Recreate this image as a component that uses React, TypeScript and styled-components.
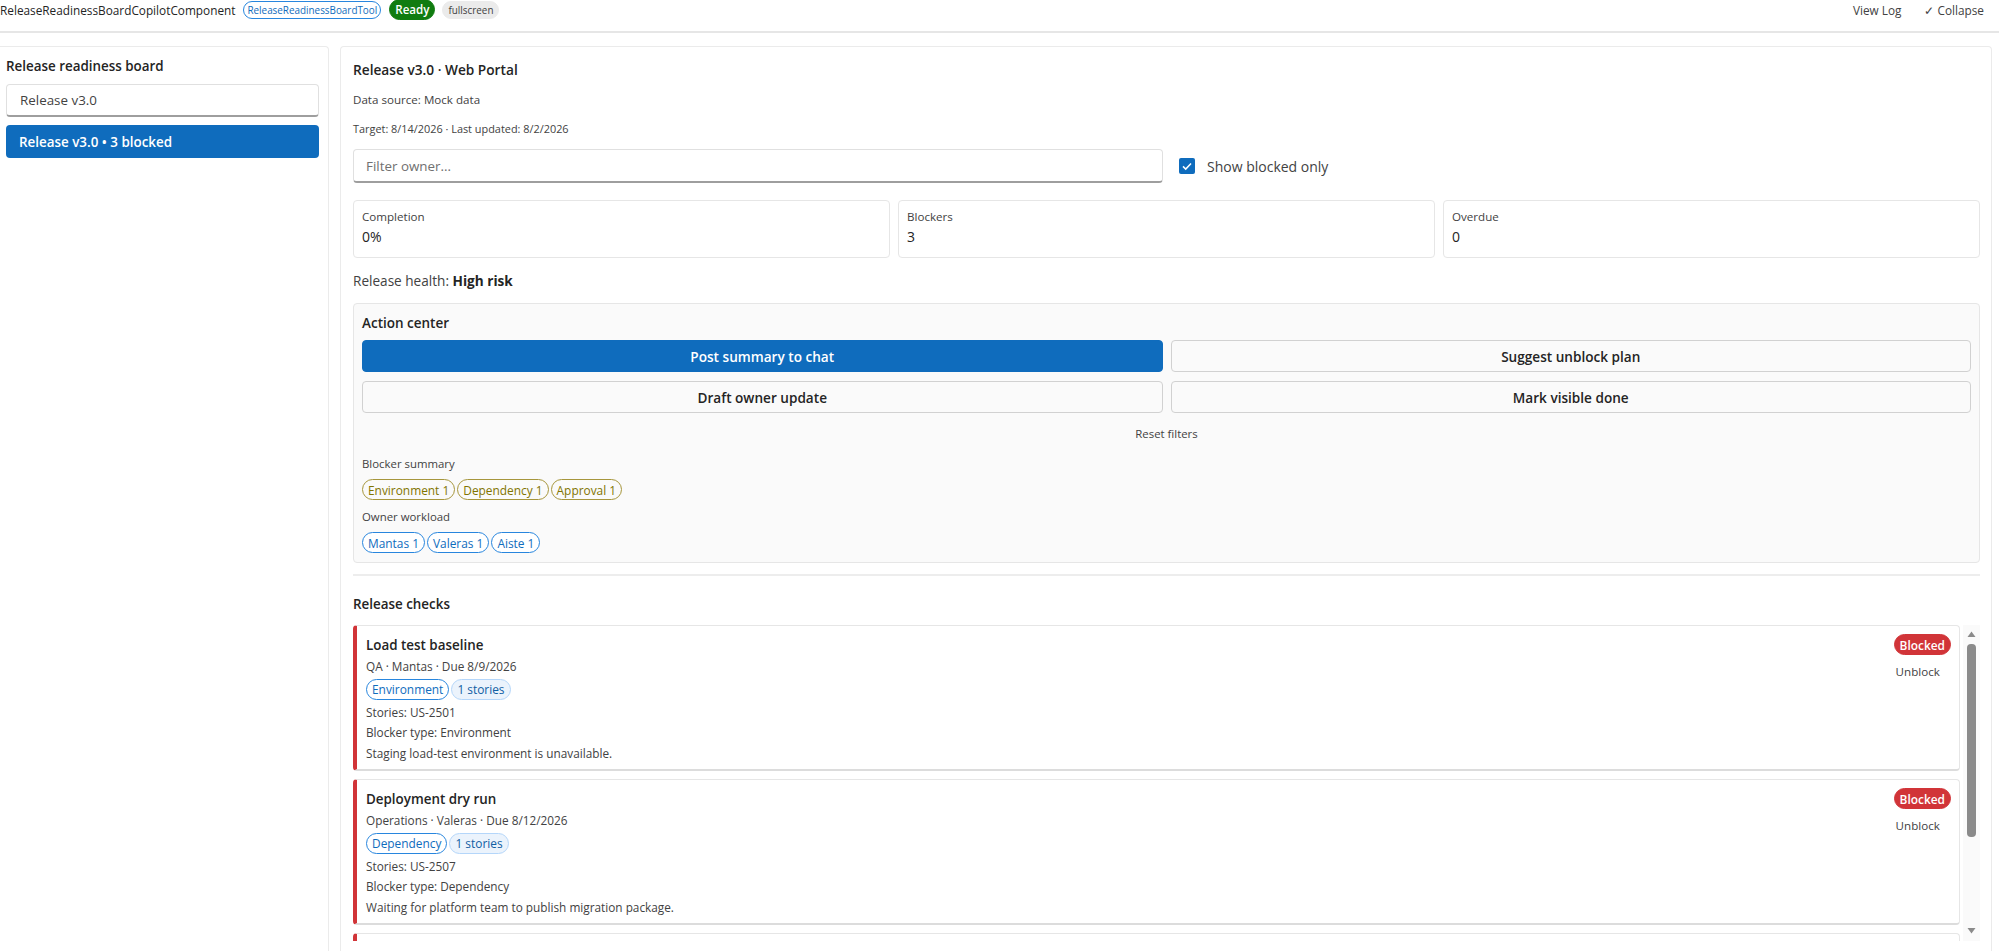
import styled, { createGlobalStyle, css } from "styled-components";

const GlobalStyle = createGlobalStyle`
  html, body {
    margin: 0;
    background: #ffffff;
    overflow: hidden;
  }

  body {
    font-family: "Open Sans", "Noto Sans", sans-serif;
    color: #242424;
  }
`;

const Page = styled.div`
  width: 1999px;
  height: 951px;
  overflow: hidden;
  display: flex;
  flex-direction: column;
`;

const Header = styled.header`
  flex: none;
  box-sizing: border-box;
  height: 33px;
  padding: 0 15px 12px 0;
  border-bottom: 2px solid #e6e6e6;
  display: flex;
  align-items: center;
  justify-content: space-between;
`;

const HeaderGroup = styled.div`
  display: flex;
  align-items: center;
  gap: 8px;
`;

const ComponentName = styled.span`
  font-size: 11.8px;
`;

const HeaderAction = styled.span`
  font-size: 11.8px;
  color: #424242;
  margin-left: 15px;
`;

type PillTone = "brand" | "olive" | "soft" | "ready" | "grey" | "danger";

const pillTones: Record<PillTone, ReturnType<typeof css>> = {
  brand: css`
    color: #0f6cbd;
    border-color: #2886de;
    background: #ffffff;
  `,
  olive: css`
    color: #817400;
    border-color: #a6963c;
    background: transparent;
  `,
  soft: css`
    color: #115ea3;
    border-color: #b4d6fa;
    background: #ebf3fc;
  `,
  ready: css`
    color: #ffffff;
    border-color: #107c10;
    background: #107c10;
    font-weight: 600;
  `,
  grey: css`
    color: #424242;
    border-color: #ebebeb;
    background: #ebebeb;
  `,
  danger: css`
    color: #ffffff;
    border-color: #d13438;
    background: #d13438;
    font-weight: 600;
  `,
};

const Pill = styled.span<{ $tone: PillTone; $size?: number }>`
  box-sizing: border-box;
  display: inline-flex;
  align-items: center;
  height: ${(p) => p.$size ?? 21}px;
  padding: 0 5px;
  border: 1px solid;
  border-radius: 999px;
  font-size: 11.9px;
  font-weight: 500;
  white-space: nowrap;
  ${(p) => pillTones[p.$tone]}
`;

const HeaderPill = styled(Pill)`
  font-size: 9.9px;
  font-weight: 400;
  padding: 0 3px;
`;

const FlagPill = styled(HeaderPill)`
  margin-left: -1px;
  padding: 0 5px;
`;

const ReadyPill = styled(Pill)`
  font-size: 11.6px;
`;

const Workspace = styled.main`
  flex: 1;
  min-height: 0;
  display: flex;
  gap: 11px;
  padding: 13px 7px 0 0;
`;

const Sidebar = styled.aside`
  flex: none;
  box-sizing: border-box;
  width: 329px;
  padding: 9px 9px 0 6px;
  border: 1px solid #ebebeb;
  border-left: 0;
  border-bottom: 0;
  border-top-right-radius: 4px;
  display: flex;
  flex-direction: column;
`;

const SidebarTitle = styled.div`
  font-size: 13.4px;
  font-weight: 600;
  line-height: 20px;
  margin-bottom: 8px;
`;

const SelectBox = styled.div`
  box-sizing: border-box;
  height: 33px;
  padding: 0 13px;
  border: 1px solid #e0e0e0;
  border-bottom: 2px solid #9e9e9e;
  border-radius: 4px;
  display: flex;
  align-items: center;
  font-size: 13.4px;
  color: #424242;
  margin-bottom: 8px;
`;

const ReleaseOption = styled.div`
  box-sizing: border-box;
  height: 33px;
  padding: 0 13px;
  border-radius: 4px;
  background: #0f6cbd;
  color: #ffffff;
  display: flex;
  align-items: center;
  font-size: 13.4px;
  font-weight: 600;
`;

const Board = styled.section`
  flex: 1;
  min-width: 0;
  box-sizing: border-box;
  padding: 13px 11px 10px 12px;
  border: 1px solid #ebebeb;
  border-bottom: 0;
  border-top-right-radius: 4px;
  border-top-left-radius: 4px;
  display: flex;
  flex-direction: column;
`;

const BoardTitle = styled.div`
  font-size: 13.7px;
  font-weight: 600;
  line-height: 20px;
  margin-bottom: 10px;
`;

const Caption = styled.div<{ $size: number }>`
  font-size: ${(p) => p.$size}px;
  line-height: 20px;
  color: #424242;
  margin-bottom: 9px;
`;

const FilterRow = styled.div`
  display: grid;
  grid-template-columns: 810px auto;
  align-items: center;
  justify-content: start;
  gap: 16px;
  margin: 1px 0 17px;
`;

const FilterInput = styled.div`
  box-sizing: border-box;
  height: 34px;
  padding: 0 12px;
  border: 1px solid #e0e0e0;
  border-bottom: 2px solid #9e9e9e;
  border-radius: 4px;
  display: flex;
  align-items: center;
  font-size: 13.4px;
  color: #707070;
`;

const CheckField = styled.label`
  display: flex;
  align-items: center;
  gap: 12px;
  font-size: 14px;
  color: #424242;
`;

const CheckMark = styled.span`
  width: 16px;
  height: 16px;
  border-radius: 2px;
  background: #0f6cbd;
  display: inline-flex;
  align-items: center;
  justify-content: center;
`;

const StatGrid = styled.div`
  display: grid;
  grid-template-columns: repeat(3, 1fr);
  gap: 8px;
`;

const StatCard = styled.div`
  box-sizing: border-box;
  height: 58px;
  padding: 6px 8px;
  border: 1px solid #e6e6e6;
  border-radius: 4px;
`;

const StatLabel = styled.div`
  font-size: 11.6px;
  line-height: 20px;
  color: #424242;
`;

const StatValue = styled.div`
  font-size: 14px;
  line-height: 20px;
`;

const Health = styled.div`
  font-size: 13.6px;
  line-height: 20px;
  color: #424242;
  margin: 13px 0 12px;

  strong {
    color: #242424;
    font-weight: 700;
  }
`;

const ActionCenter = styled.section`
  box-sizing: border-box;
  height: 260px;
  padding: 9px 8px;
  border: 1px solid #e6e6e6;
  border-radius: 4px;
  background: #fafafa;
`;

const ActionTitle = styled.div`
  font-size: 13.5px;
  font-weight: 600;
  line-height: 20px;
  margin-bottom: 7px;
`;

const ActionGrid = styled.div`
  display: grid;
  grid-template-columns: 1fr 1fr;
  gap: 9px 8px;
`;

const ActionButton = styled.button<{ $primary?: boolean }>`
  box-sizing: border-box;
  height: 32px;
  border-radius: 4px;
  font-family: inherit;
  font-size: 13.6px;
  font-weight: 600;
  border: 1px solid ${(p) => (p.$primary ? "#0f6cbd" : "#d1d1d1")};
  background: ${(p) => (p.$primary ? "#0f6cbd" : "#fafafa")};
  color: ${(p) => (p.$primary ? "#ffffff" : "#242424")};
`;

const ResetLink = styled.div`
  font-size: 11.4px;
  line-height: 20px;
  color: #424242;
  text-align: center;
  margin: 11px 0 10px;
`;

const GroupLabel = styled.div`
  font-size: 11.4px;
  line-height: 20px;
  color: #424242;
  margin-bottom: 5px;
`;

const ChipRow = styled.div`
  display: flex;
  gap: 2px;
  margin-bottom: 7px;
`;

const Divider = styled.hr`
  width: 100%;
  height: 2px;
  border: 0;
  background: #ededed;
  margin: 11px 0 18px;
`;

const SectionTitle = styled.div`
  font-size: 13.4px;
  font-weight: 600;
  line-height: 20px;
  margin-bottom: 11px;
`;

const ChecksViewport = styled.div`
  height: 316px;
  display: flex;
  gap: 3px;
`;

const CheckList = styled.div`
  flex: 1;
  min-width: 0;
  overflow: hidden;
  display: flex;
  flex-direction: column;
  gap: 8px;
`;

const CheckCard = styled.article`
  flex: none;
  box-sizing: border-box;
  height: 146px;
  padding: 8px 8px 0 9px;
  border: 1px solid #e6e6e6;
  border-left: 4px solid #d13438;
  border-bottom: 2px solid #dcdcdc;
  border-radius: 4px;
  display: flex;
  justify-content: space-between;
`;

const CheckBody = styled.div`
  display: flex;
  flex-direction: column;
`;

const CheckTitle = styled.div`
  font-size: 13.4px;
  font-weight: 600;
  line-height: 22px;
`;

const CheckLine = styled.div`
  font-size: 11.8px;
  line-height: 20.5px;
  color: #424242;
`;

const CheckChips = styled.div`
  display: flex;
  gap: 2px;
  margin: 2px 0 2px;
`;

const CheckSide = styled.div`
  display: flex;
  flex-direction: column;
  align-items: flex-start;
  gap: 7px;
`;

const UnblockLink = styled.span`
  font-size: 11.6px;
  line-height: 20px;
  color: #424242;
  margin-left: 2px;
`;

const ScrollRail = styled.div`
  flex: none;
  width: 17px;
  background: #fafafa;
  display: flex;
  flex-direction: column;
  align-items: center;
  padding: 6px 0 7px;
  box-sizing: border-box;
`;

const ScrollThumb = styled.div`
  width: 9px;
  height: 193px;
  margin-top: 6px;
  border-radius: 4px;
  background: #8a8a8a;
`;

const RailSpacer = styled.div`
  flex: 1;
`;

function RailArrow({ down }: { down?: boolean }) {
  return (
    <svg width="9" height="7" viewBox="0 0 9 7">
      <path d={down ? "M0.5 1h8L4.5 6.5z" : "M0.5 6h8L4.5 0.5z"} fill="#8a8a8a" />
    </svg>
  );
}

const checks = [
  {
    title: "Load test baseline",
    meta: "QA · Mantas · Due 8/9/2026",
    blocker: "Environment",
    stories: "US-2501",
    note: "Staging load-test environment is unavailable.",
  },
  {
    title: "Deployment dry run",
    meta: "Operations · Valeras · Due 8/12/2026",
    blocker: "Dependency",
    stories: "US-2507",
    note: "Waiting for platform team to publish migration package.",
  },
];

export default function App() {
  return (
    <Page>
      <GlobalStyle />
      <Header>
        <HeaderGroup>
          <ComponentName>ReleaseReadinessBoardCopilotComponent</ComponentName>
          <HeaderPill $tone="brand" $size={18}>ReleaseReadinessBoardTool</HeaderPill>
          <ReadyPill $tone="ready" $size={21}>Ready</ReadyPill>
          <FlagPill $tone="grey" $size={18}>fullscreen</FlagPill>
        </HeaderGroup>
        <HeaderGroup>
          <HeaderAction>View Log</HeaderAction>
          <HeaderAction>✓ Collapse</HeaderAction>
        </HeaderGroup>
      </Header>
      <Workspace>
        <Sidebar>
          <SidebarTitle>Release readiness board</SidebarTitle>
          <SelectBox>Release v3.0</SelectBox>
          <ReleaseOption>Release v3.0 • 3 blocked</ReleaseOption>
        </Sidebar>
        <Board>
          <BoardTitle>Release v3.0 · Web Portal</BoardTitle>
          <Caption $size={11.6}>Data source: Mock data</Caption>
          <Caption $size={10.9}>Target: 8/14/2026 · Last updated: 8/2/2026</Caption>
          <FilterRow>
            <FilterInput>Filter owner...</FilterInput>
            <CheckField>
              <CheckMark>
                <svg width="12" height="12" viewBox="0 0 12 12" fill="none">
                  <path d="M2 6.4l2.7 2.7L10 3.4" stroke="#fff" strokeWidth="1.5" />
                </svg>
              </CheckMark>
              Show blocked only
            </CheckField>
          </FilterRow>
          <StatGrid>
            <StatCard>
              <StatLabel>Completion</StatLabel>
              <StatValue>0%</StatValue>
            </StatCard>
            <StatCard>
              <StatLabel>Blockers</StatLabel>
              <StatValue>3</StatValue>
            </StatCard>
            <StatCard>
              <StatLabel>Overdue</StatLabel>
              <StatValue>0</StatValue>
            </StatCard>
          </StatGrid>
          <Health>
            Release health: <strong>High risk</strong>
          </Health>
          <ActionCenter>
            <ActionTitle>Action center</ActionTitle>
            <ActionGrid>
              <ActionButton $primary>Post summary to chat</ActionButton>
              <ActionButton>Suggest unblock plan</ActionButton>
              <ActionButton>Draft owner update</ActionButton>
              <ActionButton>Mark visible done</ActionButton>
            </ActionGrid>
            <ResetLink>Reset filters</ResetLink>
            <GroupLabel>Blocker summary</GroupLabel>
            <ChipRow>
              <Pill $tone="olive">Environment 1</Pill>
              <Pill $tone="olive">Dependency 1</Pill>
              <Pill $tone="olive">Approval 1</Pill>
            </ChipRow>
            <GroupLabel>Owner workload</GroupLabel>
            <ChipRow>
              <Pill $tone="brand">Mantas 1</Pill>
              <Pill $tone="brand">Valeras 1</Pill>
              <Pill $tone="brand">Aiste 1</Pill>
            </ChipRow>
          </ActionCenter>
          <Divider />
          <SectionTitle>Release checks</SectionTitle>
          <ChecksViewport>
            <CheckList>
              {checks.map((check) => (
                <CheckCard key={check.title}>
                  <CheckBody>
                    <CheckTitle>{check.title}</CheckTitle>
                    <CheckLine>{check.meta}</CheckLine>
                    <CheckChips>
                      <Pill $tone="brand">{check.blocker}</Pill>
                      <Pill $tone="soft">1 stories</Pill>
                    </CheckChips>
                    <CheckLine>Stories: {check.stories}</CheckLine>
                    <CheckLine>Blocker type: {check.blocker}</CheckLine>
                    <CheckLine>{check.note}</CheckLine>
                  </CheckBody>
                  <CheckSide>
                    <Pill $tone="danger">Blocked</Pill>
                    <UnblockLink>Unblock</UnblockLink>
                  </CheckSide>
                </CheckCard>
              ))}
              {/* next card only peeks in above the fold */}
              <CheckCard />
            </CheckList>
            <ScrollRail>
              <RailArrow />
              <ScrollThumb />
              <RailSpacer />
              <RailArrow down />
            </ScrollRail>
          </ChecksViewport>
        </Board>
      </Workspace>
    </Page>
  );
}
